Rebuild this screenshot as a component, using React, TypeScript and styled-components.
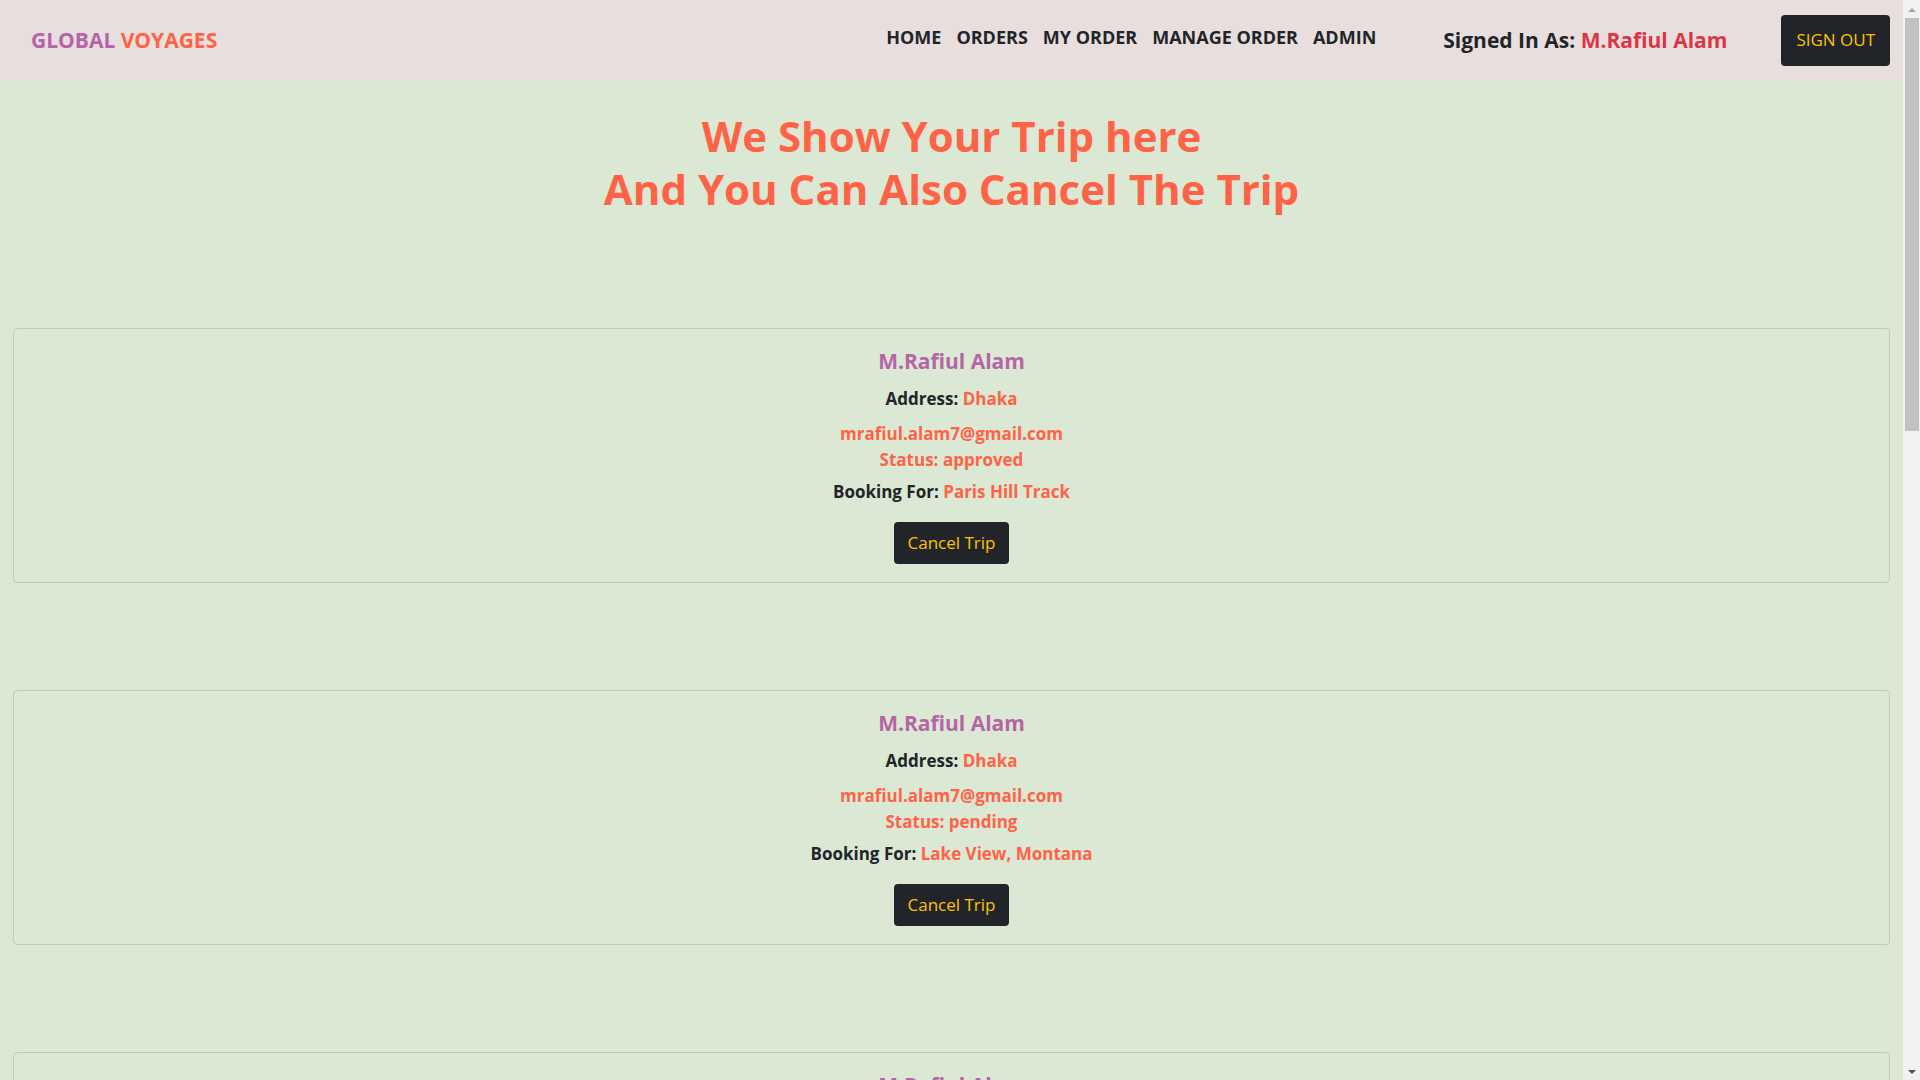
import React from "react";
import styled, { createGlobalStyle } from "styled-components";

const colors = {
  ink: "#212529",
  purple: "#b565a7",
  tomato: "#ff6347",
  red: "#dc3545",
  yellow: "#ffc107",
  header: "#e8dedd",
  page: "#dbe8d4",
};

const GlobalStyle = createGlobalStyle`
  *, *::before, *::after { box-sizing: border-box; }
  body {
    margin: 0;
    background: ${colors.page};
    color: ${colors.ink};
    font-family: "Segoe UI", "Open Sans", "Noto Sans", sans-serif;
    font-size: 16px;
  }
  h1, h2, p, ul { margin: 0; padding: 0; }
`;

const Shell = styled.div`
  display: flex;
  height: 100vh;
`;

const Page = styled.div`
  flex: 1;
  min-width: 0;
  overflow-y: auto;
  scrollbar-width: none;
`;

const Header = styled.header`
  display: flex;
  align-items: center;
  height: 80px;
  padding: 0 13px 0 31px;
  background: ${colors.header};
`;

const Brand = styled.a`
  margin-right: auto;
  color: ${colors.purple};
  font-size: 21px;
  line-height: 32px;
  font-weight: 700;
  text-decoration: none;
`;

const Accent = styled.span<{ $color?: string }>`
  color: ${({ $color }) => $color ?? colors.tomato};
`;

const NavList = styled.ul`
  display: flex;
  gap: 15px;
  margin-right: 67px;
  padding-bottom: 6px;
  list-style: none;
`;

const NavLink = styled.a`
  color: ${colors.ink};
  font-size: 18px;
  line-height: 26px;
  font-weight: 700;
  text-decoration: none;
`;

const SignedIn = styled.p`
  margin-right: 54px;
  font-size: 21px;
  line-height: 32px;
  font-weight: 700;
`;

const DarkButton = styled.button<{ $tall?: boolean }>`
  height: ${({ $tall }) => ($tall ? 51 : 42)}px;
  padding: 0 ${({ $tall }) => ($tall ? 15 : 14)}px;
  border: 0;
  border-radius: 4px;
  background: ${colors.ink};
  color: ${colors.yellow};
  font-family: inherit;
  font-size: 17px;
  line-height: 26px;
  cursor: pointer;
`;

const Title = styled.h1`
  padding-top: 29px;
  color: ${colors.tomato};
  font-size: 42px;
  line-height: 53px;
  font-weight: 700;
  text-align: center;
`;

const TripList = styled.main`
  display: flex;
  flex-direction: column;
  gap: 107px;
  padding: 113px 13px;
`;

const Card = styled.article`
  display: flex;
  flex-direction: column;
  align-items: center;
  padding: 17px 17px 18px;
  border: 1px solid #c0cbba;
  border-radius: 4px;
  text-align: center;
`;

const Name = styled.h2`
  margin-bottom: 10px;
  color: ${colors.purple};
  font-size: 21px;
  line-height: 30px;
  font-weight: 700;
`;

const Line = styled.p<{ $gap?: number }>`
  margin-bottom: ${({ $gap }) => $gap ?? 0}px;
  font-size: 17px;
  line-height: 26px;
  font-weight: 700;
`;

const Scrollbar = styled.div`
  display: flex;
  flex-direction: column;
  width: 17px;
  padding: 0 1px 0 2px;
  background: #f1f1f1;
`;

const Arrow = styled.svg`
  display: block;
  width: 14px;
  height: 18px;
`;

const Track = styled.div`
  flex: 1;
`;

const Thumb = styled.div`
  height: 39.6%;
  background: #c1c1c1;
`;

const links = ["HOME", "ORDERS", "MY ORDER", "MANAGE ORDER", "ADMIN"];

const user = "M.Rafiul Alam";

const trips = [
  { id: 1, status: "approved", place: "Paris Hill Track" },
  { id: 2, status: "pending", place: "Lake View, Montana" },
  { id: 3, status: "pending", place: "Lake View, Montana" },
];

export default function App() {
  return (
    <>
      <GlobalStyle />
      <Shell>
        <Page>
          <Header>
            <Brand href="#home">
              GLOBAL <Accent>VOYAGES</Accent>
            </Brand>
            <nav>
              <NavList>
                {links.map((label) => (
                  <li key={label}>
                    <NavLink href={"#" + label.toLowerCase().replace(" ", "-")}>{label}</NavLink>
                  </li>
                ))}
              </NavList>
            </nav>
            <SignedIn>
              Signed In As: <Accent $color={colors.red}>{user}</Accent>
            </SignedIn>
            <DarkButton type="button" $tall>SIGN OUT</DarkButton>
          </Header>
          <Title>
            We Show Your Trip here
            <br />
            And You Can Also Cancel The Trip
          </Title>
          <TripList>
            {trips.map((trip) => (
              <Card key={trip.id}>
                <Name>{user}</Name>
                <Line $gap={9}>
                  Address: <Accent>Dhaka</Accent>
                </Line>
                <Line>
                  <Accent>mrafiul.alam7@gmail.com</Accent>
                </Line>
                <Line $gap={6}>
                  <Accent>Status: {trip.status}</Accent>
                </Line>
                <Line $gap={17}>
                  Booking For: <Accent>{trip.place}</Accent>
                </Line>
                <DarkButton type="button">Cancel Trip</DarkButton>
              </Card>
            ))}
          </TripList>
        </Page>
        <Scrollbar aria-hidden="true">
          <Arrow viewBox="0 0 14 18">
            <path d="M3 12 L7 8 L11 12 Z" fill="#a3a3a3" />
          </Arrow>
          <Track>
            <Thumb />
          </Track>
          <Arrow viewBox="0 0 14 18">
            <path d="M3 8 L11 8 L7 12 Z" fill="#505050" />
          </Arrow>
        </Scrollbar>
      </Shell>
    </>
  );
}
